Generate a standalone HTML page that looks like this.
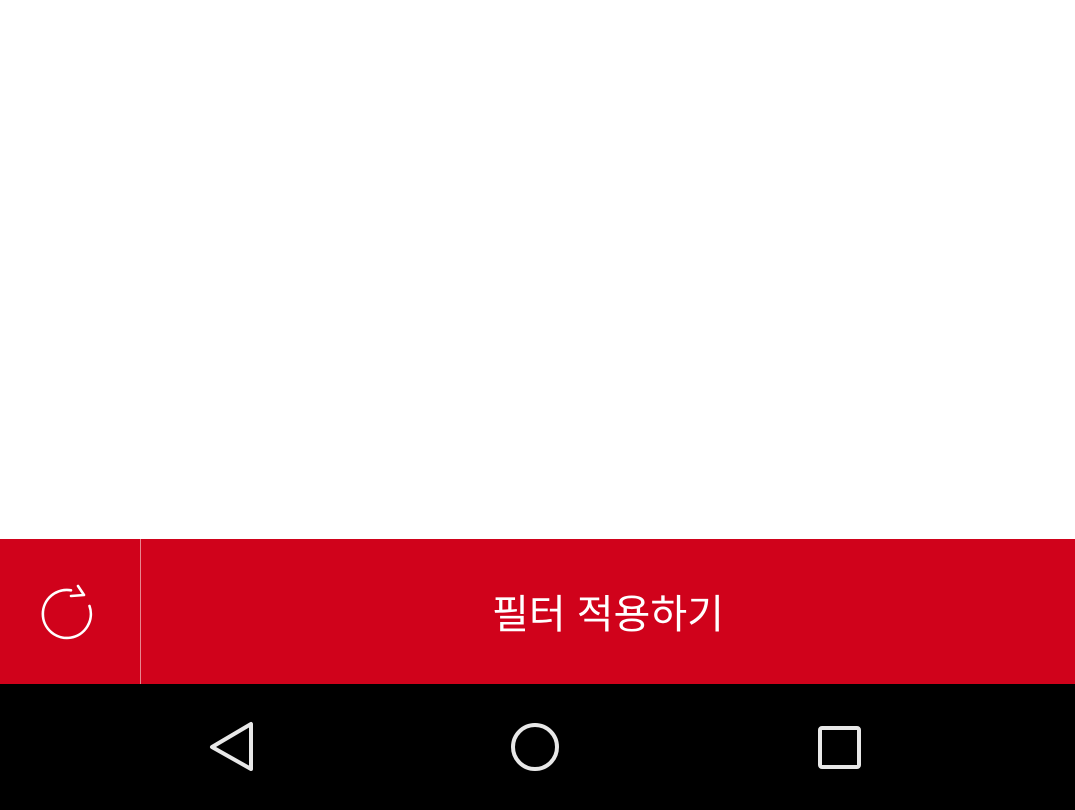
<!DOCTYPE html>
<html><head><meta charset="utf-8"><style>
html,body{margin:0;padding:0;width:1075px;height:810px;overflow:hidden;background:#fff;}
.bar{position:absolute;left:0;top:539px;width:1075px;height:145px;background:#d0021b;}
.div{position:absolute;left:140px;top:0;width:1px;height:145px;background:#e8868f;}
.txt{position:absolute;left:141px;right:0;top:4px;height:145px;line-height:145px;text-align:center;color:#fff;font-family:"Liberation Sans","Noto Sans CJK KR",sans-serif;font-size:40px;}
.nav{position:absolute;left:0;top:684px;width:1075px;height:126px;background:#000;}
svg{position:absolute;}
</style></head><body>
<div class="bar">
<svg style="left:0;top:0" width="140" height="145" viewBox="0 0 140 145">
<path d="M89.5 67 A24 24 0 1 1 71 51.3" fill="none" stroke="#fff" stroke-width="2.6" stroke-linecap="round"/>
<path d="M78 47 L84 56 L71 57" fill="none" stroke="#fff" stroke-width="2.6" stroke-linecap="round" stroke-linejoin="round"/>
</svg>
<div class="div"></div>
<div class="txt">필터 적용하기</div>
</div>
<div class="nav">
<svg style="left:0;top:0" width="1075" height="126" viewBox="0 0 1075 126">
<path d="M251 40 L251 85 L212 63 Z" fill="none" stroke="#e8e8e8" stroke-width="4" stroke-linejoin="round"/>
<circle cx="535" cy="63" r="22" fill="none" stroke="#e8e8e8" stroke-width="4"/>
<rect x="820" y="44" width="39" height="39" rx="2" fill="none" stroke="#e8e8e8" stroke-width="4"/>
</svg>
</div>
</body></html>
